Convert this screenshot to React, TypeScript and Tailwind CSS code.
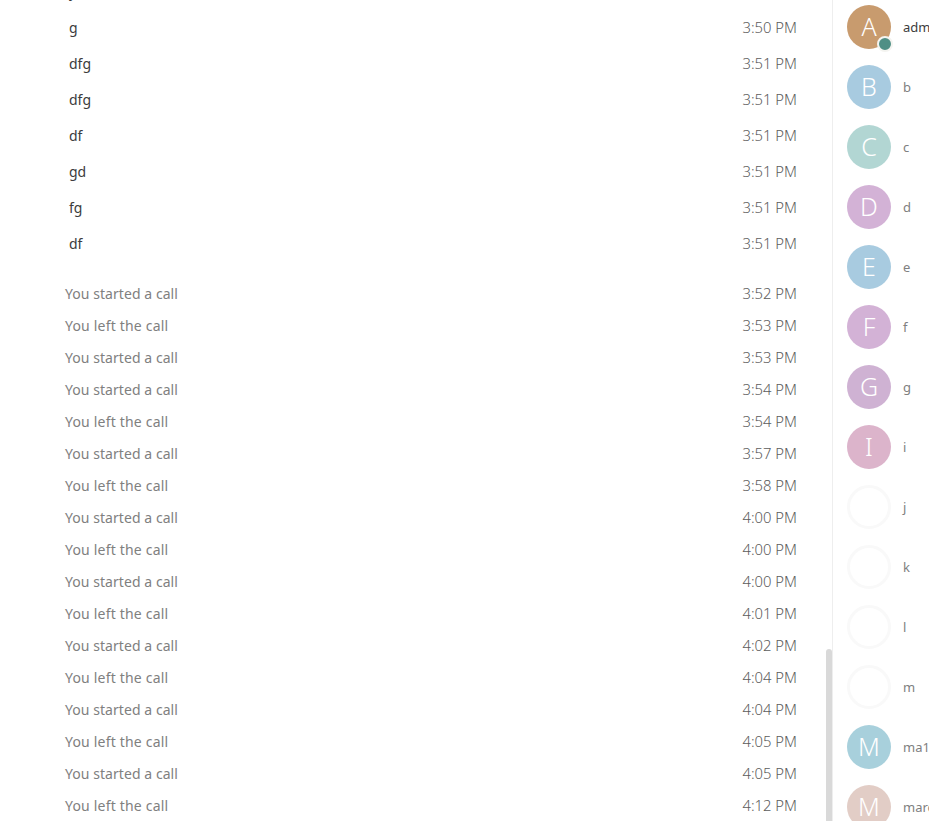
const messages = [
  ["y", "3:50 PM"],
  ["g", "3:50 PM"],
  ["dfg", "3:51 PM"],
  ["dfg", "3:51 PM"],
  ["df", "3:51 PM"],
  ["gd", "3:51 PM"],
  ["fg", "3:51 PM"],
  ["df", "3:51 PM"],
];

const calls = [
  ["You started a call", "3:52 PM"],
  ["You left the call", "3:53 PM"],
  ["You started a call", "3:53 PM"],
  ["You started a call", "3:54 PM"],
  ["You left the call", "3:54 PM"],
  ["You started a call", "3:57 PM"],
  ["You left the call", "3:58 PM"],
  ["You started a call", "4:00 PM"],
  ["You left the call", "4:00 PM"],
  ["You started a call", "4:00 PM"],
  ["You left the call", "4:01 PM"],
  ["You started a call", "4:02 PM"],
  ["You left the call", "4:04 PM"],
  ["You started a call", "4:04 PM"],
  ["You left the call", "4:05 PM"],
  ["You started a call", "4:05 PM"],
  ["You left the call", "4:12 PM"],
];

const members = [
  { letter: "A", name: "admin", bg: "bg-[#c89b6e]", online: true },
  { letter: "B", name: "b", bg: "bg-[#a8cbe0]" },
  { letter: "C", name: "c", bg: "bg-[#b2d6d3]" },
  { letter: "D", name: "d", bg: "bg-[#d3b2d6]" },
  { letter: "E", name: "e", bg: "bg-[#a8cbe0]" },
  { letter: "F", name: "f", bg: "bg-[#d3b2d6]" },
  { letter: "G", name: "g", bg: "bg-[#cfb2d3]" },
  { letter: "I", name: "i", bg: "bg-[#dcb4cb]" },
  { letter: "", name: "j", bg: "" },
  { letter: "", name: "k", bg: "" },
  { letter: "", name: "l", bg: "" },
  { letter: "", name: "m", bg: "" },
  { letter: "M", name: "ma1", bg: "bg-[#a8d0dc]" },
  { letter: "M", name: "marc", bg: "bg-[#e2cdc6]" },
];

const App = () => {
  return (
    <div className="flex h-[821px] w-[929px] overflow-hidden bg-white font-['Noto_Sans',sans-serif]">
      <main className="relative w-[833px] shrink-0 overflow-hidden border-r border-[#eeeeee]">
        <div className="-mt-[26px]">
          {messages.map(([text, time], i) => (
            <div key={i} className="flex h-9 items-center justify-between pl-[69px] pr-[35px]">
              <span className="text-sm text-[#3c3c3c]">{text}</span>
              <span className="mb-[2px] text-[14.8px] font-light leading-[20px] text-[#5c5c5c]">{time}</span>
            </div>
          ))}
        </div>
        <div className="mt-[16px]">
          {calls.map(([text, time], i) => (
            <div key={i} className="flex h-8 items-center justify-between pl-[65px] pr-[35px]">
              <span className={`text-sm text-[#808080] ${text.includes("left") ? "tracking-[0.19px]" : "tracking-[0.06px]"}`}>
                {text}
              </span>
              <span className="mb-[2px] text-[14.8px] font-light leading-[20px] text-[#5c5c5c]">{time}</span>
            </div>
          ))}
        </div>
        <div className="absolute right-0 top-[649px] h-[172px] w-[6px] rounded-t-[3px] bg-[#d9d9d9]" />
      </main>
      <aside className="flex-1 overflow-hidden pl-[14px] pt-[5px]">
        {members.map((m) => (
          <div key={m.name} className="flex h-[60px] items-start gap-3">
            <div
              className={`relative flex h-11 w-11 shrink-0 items-center justify-center rounded-full text-[25px] font-[350] text-white ${
                m.bg || "border-[3px] border-[#f9f9f9]"
              }`}
            >
              {m.letter}
              {m.online && (
                <span className="absolute -bottom-[3px] -right-[2px] h-4 w-4 rounded-full border-2 border-[#f4f4f0] bg-[#4f8f85]" />
              )}
            </div>
            <span
              className={`whitespace-nowrap pt-[12px] text-[13px] leading-[20px] ${
                m.online ? "text-[#3c3c3c]" : "text-[#808080]"
              }`}
            >
              {m.name}
            </span>
          </div>
        ))}
      </aside>
    </div>
  );
};

export default App;
